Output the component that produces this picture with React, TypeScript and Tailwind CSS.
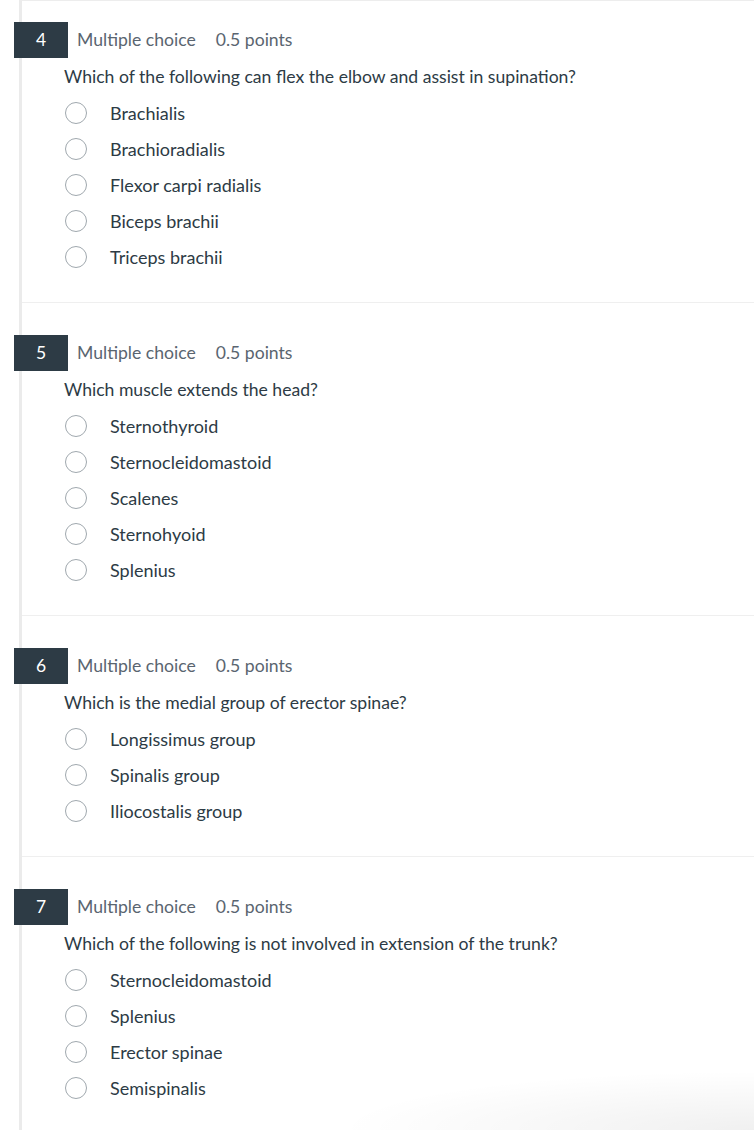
import React from 'react';

interface Question {
  num: number;
  text: string;
  options: string[];
}

const questions: Question[] = [
  {
    num: 4,
    text: 'Which of the following can flex the elbow and assist in supination?',
    options: ['Brachialis', 'Brachioradialis', 'Flexor carpi radialis', 'Biceps brachii', 'Triceps brachii'],
  },
  {
    num: 5,
    text: 'Which muscle extends the head?',
    options: ['Sternothyroid', 'Sternocleidomastoid', 'Scalenes', 'Sternohyoid', 'Splenius'],
  },
  {
    num: 6,
    text: 'Which is the medial group of erector spinae?',
    options: ['Longissimus group', 'Spinalis group', 'Iliocostalis group'],
  },
  {
    num: 7,
    text: 'Which of the following is not involved in extension of the trunk?',
    options: ['Sternocleidomastoid', 'Splenius', 'Erector spinae', 'Semispinalis'],
  },
];

export default function App() {
  return (
    <div className="relative h-[1130px] w-[754px] overflow-hidden bg-white font-['Lato','Noto_Sans',sans-serif] text-[#2d3b45]">
      <div className="ml-[19px] border-l-[3px] border-t border-l-[#ebebeb] border-t-[#ededed]">
        {questions.map((q, i) => (
          <QuestionBlock key={q.num} q={q} first={i === 0} />
        ))}
      </div>
      <div className="pointer-events-none absolute bottom-0 right-0 h-[60px] w-[420px] bg-[radial-gradient(ellipse_at_bottom_right,rgba(0,0,0,0.06),rgba(0,0,0,0)_70%)]" />
    </div>
  );
}

function QuestionBlock({ q, first }: { q: Question; first: boolean }) {
  return (
    <section className={`${first ? 'pt-[21px]' : 'border-t border-[#efefef] pt-[32px]'} pb-[27px]`}>
      <div className="flex items-center">
        <div className="-ml-[8px] flex h-[36px] w-[54px] items-center justify-center bg-[#2d3b45] text-[17.5px] text-white">
          {q.num}
        </div>
        <div className="ml-[9px] flex gap-[20px] text-[17.6px] text-[#5a6570]">
          <span>Multiple choice</span>
          <span>0.5 points</span>
        </div>
      </div>
      <p className="ml-[42px] mt-[8px] text-[17.6px] leading-[22px]">{q.text}</p>
      <div className="ml-[43px] mt-[7px]">
        {q.options.map((o) => (
          <label key={o} className="flex h-[36px] items-center">
            <span className="h-[22px] w-[22px] rounded-full border border-[#a0a8ae] bg-white" />
            <span className="ml-[23px] text-[18px]">{o}</span>
          </label>
        ))}
      </div>
    </section>
  );
}
